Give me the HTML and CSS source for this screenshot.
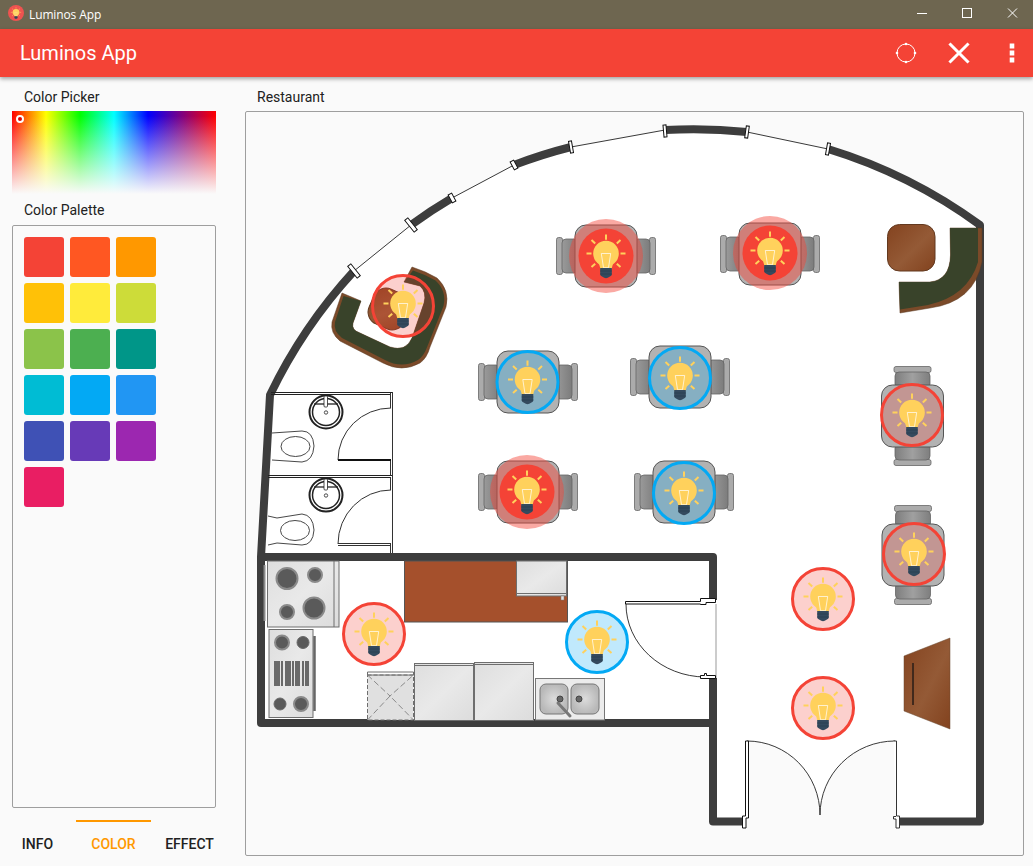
FILE: index.html
```html
<!DOCTYPE html>
<html lang="en">
<head>
<meta charset="utf-8">
<title>Luminos App</title>
<link rel="stylesheet" href="styles.css">
</head>
<body>
<div class="app">
  <header class="titlebar">
    <svg class="logo" viewBox="-30 -30 60 60"><circle class="logo-disc" r="30"/><use href="#bulb"/></svg>
    <span class="titlebar-text">Luminos App</span>
    <div class="win-controls">
      <svg class="win-icon" viewBox="0 0 45 29"><path class="win-stroke" d="M19 13.500H29"/></svg>
      <svg class="win-icon" viewBox="0 0 45 29"><rect class="win-stroke" x="19.500" y="8.500" width="9" height="9"/></svg>
      <svg class="win-icon" viewBox="0 0 45 29"><path class="win-stroke" d="M20 8.500L29 17.500M29 8.500L20 17.500"/></svg>
    </div>
  </header>
  <nav class="appbar">
    <span class="appbar-title">Luminos App</span>
    <div class="appbar-actions">
      <svg class="action" viewBox="0 0 24 24"><circle class="ring-line" cx="12" cy="12" r="9"/><circle class="dot" cx="12" cy="3" r="1.300"/><circle class="dot" cx="12" cy="21" r="1.300"/><circle class="dot" cx="3" cy="12" r="1.300"/><circle class="dot" cx="21" cy="12" r="1.300"/></svg>
      <svg class="action" viewBox="0 0 24 24"><path class="x-line" d="M3.500 3.500L20.500 20.500M20.500 3.500L3.500 20.500"/></svg>
      <svg class="action" viewBox="0 0 24 24"><path class="dot" d="M9.700 2.500h4.600v5H9.700zM9.700 9.500h4.600v5H9.700zM9.700 16.500h4.600v5H9.700z"/></svg>
    </div>
  </nav>
  <main class="main">
    <aside class="sidebar">
      <div class="label label-top">Color Picker</div>
      <div class="picker"><span class="picker-handle"></span></div>
      <div class="label label-mid">Color Palette</div>
      <div class="palette">
        <span class="swatch c1"></span><span class="swatch c2"></span><span class="swatch c3"></span>
        <span class="swatch c4"></span><span class="swatch c5"></span><span class="swatch c6"></span>
        <span class="swatch c7"></span><span class="swatch c8"></span><span class="swatch c9"></span>
        <span class="swatch c10"></span><span class="swatch c11"></span><span class="swatch c12"></span>
        <span class="swatch c13"></span><span class="swatch c14"></span><span class="swatch c15"></span>
        <span class="swatch c16"></span>
      </div>
      <div class="tabs">
        <div class="tab">INFO</div>
        <div class="tab tab-active">COLOR</div>
        <div class="tab">EFFECT</div>
      </div>
    </aside>
    <section class="content">
      <div class="label label-top">Restaurant</div>
      <div class="plan-frame">
<svg class="plan" viewBox="246 112 777 743" preserveAspectRatio="xMinYMin meet">
  <defs>
    <linearGradient id="wood" x1="0" y1="0" x2="1" y2="1"><stop offset="0" stop-color="#84431f"/><stop offset=".55" stop-color="#945a36"/><stop offset="1" stop-color="#82421e"/></linearGradient>
    <linearGradient id="steel" x1="0" y1="0" x2="1" y2="1"><stop offset="0" stop-color="#dedede"/><stop offset=".5" stop-color="#e9e9e9"/><stop offset="1" stop-color="#dcdcdc"/></linearGradient>
    <linearGradient id="seatH" x1="0" y1="0" x2="1" y2="0"><stop offset="0" stop-color="#9a9a9a"/><stop offset="1" stop-color="#7c7c7c"/></linearGradient>
    <linearGradient id="seatV" x1="0" y1="0" x2="1" y2="0"><stop offset="0" stop-color="#7e7e7e"/><stop offset=".5" stop-color="#a0a0a0"/><stop offset="1" stop-color="#7e7e7e"/></linearGradient>
    <radialGradient id="basin"><stop offset="0" stop-color="#dcdcdc"/><stop offset="1" stop-color="#b8b8b8"/></radialGradient>

    <g id="bulb">
      <g class="rays">
        <path d="M0-21.500V-16.300M-19.500-2.500H-14.500M19.500-2.500H14.500M-14.500-16L-10.800-12.500M14.500-16L10.800-12.500M-14.500 11L-10.800 7.700M14.500 11L10.800 7.700"/>
      </g>
      <circle class="globe" cy="-2.500" r="12.800"/>
      <path class="globe" d="M-7.500 6L-5.500 13H5.500L7.500 6Z"/>
      <path class="filament" d="M-4.700-2.500H4.700L2.500 11.700H-2.500Z"/>
      <path class="bulb-base" d="M-5.800 12H5.800V18.500Q5.800 20 3.500 20.800Q0 23.500-3.500 20.800Q-5.800 20-5.800 18.500Z"/>
      <path class="bulb-stripe" d="M-5.800 15H5.800M-5.800 18H5.800"/>
    </g>

    <g id="chairH">
      <rect class="chair-back" x="-49.500" y="-18.500" width="6" height="37" rx="2"/>
      <rect class="chair-seat" x="-44" y="-17" width="16" height="34" rx="4"/>
      <rect class="chair-back" x="43.500" y="-18.500" width="6" height="37" rx="2"/>
      <rect class="chair-seat" x="28" y="-17" width="16" height="34" rx="4"/>
      <rect class="table" x="-31" y="-31" width="62" height="62" rx="11"/>
    </g>
    <g id="chairV">
      <rect class="chair-back" x="-18.500" y="-49.500" width="37" height="6" rx="2"/>
      <rect class="chair-seat-v" x="-17.500" y="-44" width="35" height="16" rx="4"/>
      <rect class="chair-back" x="-18.500" y="43.500" width="37" height="6" rx="2"/>
      <rect class="chair-seat-v" x="-17.500" y="28" width="35" height="16" rx="4"/>
      <rect class="table" x="-31" y="-31" width="62" height="62" rx="11"/>
    </g>

    <g id="sink">
      <circle class="sink-outer" r="16.500"/>
      <circle class="sink-inner" r="13.500"/>
      <path class="sink-bar" d="M-12-8H12"/>
      <rect class="sink-tap" x="-2" y="-16" width="3.500" height="11" rx="1"/>
      <circle class="sink-drain" cy="0.500" r="1.700"/>
    </g>
    <g id="lightRed">
      <circle class="ring ring-red" r="30.500"/>
      <use href="#bulb"/>
    </g>
    <g id="lightBlue">
      <circle class="ring ring-blue" r="30.500"/>
      <use href="#bulb"/>
    </g>
    <g id="lightGlow">
      <circle class="halo" r="37"/>
      <circle class="halo-core" r="27.500"/>
      <use href="#bulb"/>
    </g>
  </defs>

  <!-- floor -->
  <path class="floor" d="M270 395A510 510 0 0 1 354 271L411 225A510 510 0 0 1 452 198L514 165A510 510 0 0 1 571 147L665 130A510 510 0 0 1 747 132L828 149A510 510 0 0 1 980 225V821.500H897L895 741A75 74 0 0 0 820 815A73 74 0 0 0 747 741L745 821.500H713V723H261V557Z"/>

  <!-- walls -->
  <path class="wall" d="M354 271A510 510 0 0 0 270 395L261 557V723H713M713 600V557H261M713 678V821.500H745M897 821.500H980V225A510 510 0 0 0 828 149M411 225A510 510 0 0 1 452 198M514 165A510 510 0 0 1 571 147M665 130A510 510 0 0 1 747 132"/>

  <!-- windows -->
  <path class="win-line" d="M354 271L411 225M452 198L514 165M571 147L665 130M747 132L828 149"/>
  <rect class="cap" x="-2" y="-7.500" width="4" height="15" transform="translate(354 271) rotate(-39)"/>
  <rect class="cap" x="-2" y="-7.500" width="4" height="15" transform="translate(411 225) rotate(-39)"/>
  <rect class="cap" x="-2" y="-4.500" width="4" height="9" transform="translate(452 198) rotate(-28)"/>
  <rect class="cap" x="-2" y="-4.500" width="4" height="9" transform="translate(514 165) rotate(-28)"/>
  <rect class="cap" x="-1.500" y="-6" width="3" height="12" transform="translate(571 147) rotate(-10)"/>
  <rect class="cap" x="-1.500" y="-6" width="3" height="12" transform="translate(665 131) rotate(-5)"/>
  <rect class="cap" x="-1.500" y="-6" width="3" height="12" transform="translate(747 132) rotate(8)"/>
  <rect class="cap" x="-1.500" y="-6" width="3" height="12" transform="translate(828 149) rotate(10)"/>

  <!-- restrooms -->
  <path class="line-double" d="M271 392.500H392.500M271 394.500H390.500M268 475.500H392.500M268 477.500H390.500"/>
  <path class="line-thin" d="M392.500 392V553M390.500 393V408M390.500 460V475M390.500 477V490M390.500 544V553"/>
  <path class="line-thin" d="M391 408A53 52 0 0 0 338 460M391 490A53 54 0 0 0 338 544"/>
  <path class="line-thick" d="M338 460H391"/>
  <path class="line-thin" d="M338 545.500H391M338 543.500H391"/>
  <use href="#sink" transform="translate(326 412)"/>
  <use href="#sink" transform="translate(326 495)"/>
  <path class="toilet" d="M272 433L302 431Q313 431 314 446Q313 461 302 462L272 460"/>
  <ellipse class="toilet" cx="295.500" cy="446.500" rx="14.500" ry="10"/>
  <path class="toilet" d="M268 516L277 518L302 514Q313 515 314 530Q313 545 302 545L277 543L268 545"/>
  <ellipse class="toilet" cx="295" cy="530.500" rx="14.500" ry="10"/>

  <!-- kitchen -->
  <rect class="steel" x="267.500" y="561" width="71.500" height="66"/>
  <path class="steel-line" d="M334 561V627"/>
  <path class="handle" d="M264.500 565V621"/>
  <circle class="burner" cx="287" cy="578.500" r="10.500"/>
  <circle class="burner" cx="315" cy="575" r="7"/>
  <circle class="burner" cx="287" cy="612" r="7"/>
  <circle class="burner" cx="314" cy="608" r="10.500"/>
  <rect class="steel" x="269" y="629.500" width="44" height="88"/>
  <path class="handle handle-dark" d="M314.500 636V711"/>
  <circle class="burner" cx="282" cy="642.500" r="7"/>
  <circle class="burner burner-flat" cx="303" cy="642.500" r="6"/>
  <circle class="burner burner-flat" cx="280" cy="704" r="6"/>
  <circle class="burner" cx="301" cy="704" r="7"/>
  <path class="grill" d="M274 661h6v25h-6zM281 661h2v25h-2zM285 661h6v25h-6zM292 661h2v25h-2zM295 661h5v25h-5zM302 661h2v25h-2zM305 661h4v25h-4z"/>

  <rect class="counter" x="404.500" y="561" width="163" height="61"/>
  <rect class="steel" x="516.500" y="561" width="50" height="35"/>
  <path class="steel-line" d="M516.500 593.500H566.500"/>
  <rect class="steel-peg" x="561" y="596" width="3" height="4"/>

  <rect class="steel-dash" x="367.500" y="675" width="46" height="45"/>
  <path class="dash" d="M367.500 675L390 696L413.500 675M367.500 720L390 696L413.500 720"/>
  <path class="steel-line" d="M367.500 672V675H413.500V672H367.500"/>
  <rect class="steel" x="414.500" y="663.500" width="59" height="57"/>
  <path class="steel-line" d="M414.500 665.500H473.500"/>
  <rect class="steel" x="474.500" y="662.500" width="59" height="58"/>
  <path class="steel-line" d="M474.500 664.500H533.500"/>
  <rect class="wash" x="535.500" y="678.500" width="69" height="41.500"/>
  <rect class="basin" x="540" y="684" width="28" height="30" rx="6"/>
  <rect class="basin" x="571" y="684" width="28" height="30" rx="6"/>
  <circle class="drain" cx="560" cy="699" r="3"/>
  <circle class="drain" cx="579" cy="699" r="3"/>
  <path class="faucet" d="M558 703L570 716"/>

  <!-- kitchen door -->
  <path class="thin-wall" d="M716 604V678"/>
  <path class="door-arc" d="M626 604A80 73 0 0 0 705 677"/>
  <path class="door-part" d="M625.500 601.500H700.500V598.500H715.500V602.500H706V604.500H700.500V604H625.500Z"/>
  <path class="door-part" d="M700.500 675.500H704.500V673.500H706.500V675.500H715.500V678.500H700.500Z"/>

  <!-- entrance doors -->
  <path class="door-arc" d="M747 741A73 74 0 0 1 820 815M895 741A75 74 0 0 0 820 815"/>
  <path class="door-part" d="M745.500 741H748.500V816H748.500V818H746V828H742.500V816H745.500Z"/>
  <path class="door-part door-grey" d="M893.500 741H896.500V816H899.500V828H896V819H893.500V816.500H896"/>

  <!-- bars -->
  <path class="bar-edge" d="M342 293L332 322Q330 333 340 341L383 363Q402 373 420 363Q427 358 430 347L446 307Q450 290 437 278Q425 271 412 267L404 282L420 286Q427 292 424 303L412 338Q406 352 390 347L360 333Q351 330 353 323L361 301Z"/>
  <path class="bar-top" d="M343.500 296L335 322Q333 331 342 338L385 360Q402 369 418 360Q424 356 427.500 346L443.500 306Q447 291 435.500 280.500Q424 274 413 270.500L404 282L420 286Q427 292 424 303L412 338Q406 352 390 347L360 333Q351 330 353 323L361 301Z"/>
  <rect class="wood" x="370" y="290" width="38" height="38" rx="13" transform="rotate(24 389 309)"/>

  <rect class="wood" x="887.500" y="224.500" width="47.500" height="46.500" rx="12"/>
  <path class="bar-edge" d="M950 228H982V262Q974 302 930 308L900 313L899 282H930Q950 280 950.500 255Z"/>
  <path class="bar-top" d="M950 228H978V262Q968 296 928 305L900 309.500L899 282H930Q950 280 950.500 255Z"/>

  <!-- cabinet -->
  <path class="cabinet" d="M904 656L950 638V729L904 711Z"/>
  <path class="cabinet-slot" d="M913 663V705"/>

  <!-- tables -->
  <use href="#chairH" transform="translate(606 256)"/>
  <use href="#chairH" transform="translate(770 254)"/>
  <use href="#chairH" transform="translate(528 382)"/>
  <use href="#chairH" transform="translate(680 377)"/>
  <use href="#chairH" transform="translate(528 492)"/>
  <use href="#chairH" transform="translate(684 492)"/>
  <use href="#chairV" transform="translate(912.500 416)"/>
  <use href="#chairV" transform="translate(913 555)"/>

  <!-- lights -->
  <use href="#lightRed" transform="translate(403 306)"/>
  <use href="#lightGlow" transform="translate(606 256)"/>
  <use href="#lightGlow" transform="translate(770 253)"/>
  <use href="#lightBlue" transform="translate(527.500 382)"/>
  <use href="#lightBlue" transform="translate(680 378)"/>
  <use href="#lightGlow" transform="translate(527 492)"/>
  <use href="#lightBlue" transform="translate(684 493)"/>
  <use href="#lightRed" transform="translate(912 415)"/>
  <use href="#lightRed" transform="translate(914 554)"/>
  <use href="#lightRed" transform="translate(374 634)"/>
  <use href="#lightBlue" transform="translate(597 642)"/>
  <use href="#lightRed" transform="translate(823 599)"/>
  <use href="#lightRed" transform="translate(823 708)"/>
</svg>
      </div>
    </section>
  </main>
</div>
</body>
</html>
```
FILE: styles.css
```css
* { box-sizing: border-box; }
html, body { margin: 0; padding: 0; }
body { background: #fafafa; font-family: Roboto, "Liberation Sans", sans-serif; color: #212121; overflow: hidden; }
.app { width: 1033px; height: 866px; display: flex; flex-direction: column; }

.titlebar { height: 29px; flex: none; background: #6e6650; color: #fff; display: flex; align-items: center; padding-left: 8px; }
.logo { width: 16px; height: 16px; margin-top: -3px; }
.logo-disc { fill: #ef5350; }
.titlebar-text { margin-left: 5px; margin-top: -1px; font: 12px "Open Sans", "Noto Sans", sans-serif; letter-spacing: -.12px; }
.win-controls { margin-left: auto; display: flex; }
.win-icon { width: 45px; height: 29px; display: block; }
.win-stroke { fill: none; stroke: #fff; stroke-width: 1; }

.appbar { height: 48px; flex: none; background: #f44336; color: #fff; display: flex; align-items: center; padding-left: 20px; box-shadow: 0 2px 4px rgba(0, 0, 0, .35); position: relative; z-index: 1; }
.appbar-title { font-size: 20px; }
.appbar-actions { margin-left: auto; display: flex; gap: 29px; padding-right: 9px; }
.action { width: 24px; height: 24px; display: block; }
.ring-line { fill: none; stroke: #fff; stroke-width: 1; }
.dot { fill: #fff; }
.x-line { fill: none; stroke: #fff; stroke-width: 3; stroke-linecap: square; }

.main { flex: 1; display: flex; min-height: 0; }
.sidebar { width: 245px; flex: none; display: flex; flex-direction: column; padding-left: 12px; padding-right: 29px; }
.label { font-size: 14px; padding-left: 12px; line-height: 20px; }
.label-top { height: 34px; padding-top: 10px; flex: none; }
.label-mid { height: 31px; padding-top: 6px; flex: none; }

.picker { height: 83px; flex: none; position: relative;
  background:
    linear-gradient(to bottom, rgba(250,250,250,0) 6%, rgba(250,250,250,1) 100%),
    linear-gradient(to right, #f00 0%, #ff0 16.67%, #0f0 33.33%, #0ff 50%, #00f 66.67%, #f00 100%); }
.picker-handle { position: absolute; left: 4px; top: 4px; width: 8px; height: 8px; border: 2px solid #fff; border-radius: 50%; background: #e00000; }

.palette { flex: 1; min-height: 0; border: 1px solid #9e9e9e; border-radius: 2px; padding: 11px; display: grid; grid-template-columns: repeat(3, 40px); grid-auto-rows: 40px; gap: 6px; align-content: start; }
.swatch { border-radius: 3px; display: block; }
.c1 { background: #f44336; } .c2 { background: #ff5722; } .c3 { background: #ff9800; }
.c4 { background: #ffc107; } .c5 { background: #ffeb3b; } .c6 { background: #cddc39; }
.c7 { background: #8bc34a; } .c8 { background: #4caf50; } .c9 { background: #009688; }
.c10 { background: #00bcd4; } .c11 { background: #03a9f4; } .c12 { background: #2196f3; }
.c13 { background: #3f51b5; } .c14 { background: #673ab7; } .c15 { background: #9c27b0; }
.c16 { background: #e91e63; }

.tabs { height: 58px; flex: none; display: flex; gap: 1px; margin-left: -12px; margin-right: -13px; padding-top: 12px; }
.tab { width: 75px; font-size: 14px; font-weight: 500; text-align: center; padding-top: 13px; line-height: 18px; border-top: 2px solid transparent; }
.tab-active { color: #ff9800; border-top-color: #ff9800; }

.content { flex: 1; min-width: 0; display: flex; flex-direction: column; padding-right: 9px; padding-bottom: 10px; }
.plan-frame { flex: 1; min-height: 0; border: 1px solid #9e9e9e; border-radius: 2px; background: #fafafa; overflow: hidden; }
.plan { display: block; width: 777px; height: 743px; }

.floor { fill: #fff; }
.wall { fill: none; stroke: #3d3d3d; stroke-width: 8; stroke-linejoin: round; }
.win-line { fill: none; stroke: #222; stroke-width: .9; }
.cap { fill: #fff; stroke: #111; stroke-width: 1; }
.line-double { fill: none; stroke: #222; stroke-width: 1; }
.line-thin { fill: none; stroke: #333; stroke-width: 1; }
.line-thick { fill: none; stroke: #111; stroke-width: 1.800; }
.toilet { fill: #fff; stroke: #333; stroke-width: .9; }
.sink-outer { fill: #fff; stroke: #222; stroke-width: 2; }
.sink-inner { fill: #fff; stroke: #222; stroke-width: 1.500; }
.sink-bar { stroke: #222; stroke-width: 1.300; fill: none; }
.sink-tap { fill: #fff; stroke: #222; stroke-width: .8; }
.sink-drain { fill: #fff; stroke: #222; stroke-width: .8; }

.steel { fill: url(#steel); stroke: #6e6e6e; stroke-width: 1; }
.steel-line { fill: none; stroke: #6e6e6e; stroke-width: 1; }
.steel-peg { fill: #e4e4e4; stroke: #777; stroke-width: .5; }
.steel-dash { fill: #e0e0e0; stroke: #6e6e6e; stroke-width: 1; stroke-dasharray: 4 2; }
.dash { fill: none; stroke: #8a8a8a; stroke-width: 1; stroke-dasharray: 6 3; }
.handle { fill: none; stroke: #8a8a8a; stroke-width: 2; }
.handle-dark { stroke: #666; stroke-width: 2.500; }
.burner { fill: #5a5a5a; stroke: #8a8a8a; stroke-width: 2; }
.burner-flat { stroke-width: 1; stroke: #6a6a6a; }
.grill { fill: #6a6a6a; }
.counter { fill: #a5502c; stroke: #555; stroke-width: 1; }
.wash { fill: #ececec; stroke: #777; stroke-width: 1; }
.basin { fill: url(#basin); stroke: #777; stroke-width: 1; }
.drain { fill: #666; stroke: #444; stroke-width: 1; }
.faucet { fill: none; stroke: #777; stroke-width: 3; stroke-linecap: round; }

.thin-wall { fill: none; stroke: #999; stroke-width: 1; }
.door-arc { fill: none; stroke: #222; stroke-width: .9; }
.door-part { fill: #fff; stroke: #111; stroke-width: 1; }
.door-grey { stroke: #333; }

.bar-edge { fill: #7b4a29; stroke: #5a3a22; stroke-width: .5; }
.bar-top { fill: #39432a; }
.wood { fill: url(#wood); stroke: #63391f; stroke-width: 1; }
.cabinet { fill: url(#wood); stroke: #6b4a32; stroke-width: .5; }
.cabinet-slot { fill: none; stroke: #41291c; stroke-width: 2; }

.chair-back { fill: #ababab; stroke: #666; stroke-width: .8; }
.chair-seat { fill: url(#seatH); stroke: #666; stroke-width: .8; }
.chair-seat-v { fill: url(#seatV); stroke: #666; stroke-width: .8; }
.table { fill: #b2b2b2; stroke: #555; stroke-width: 1; }

.ring { stroke-width: 3; }
.ring-red { fill: rgba(244, 67, 54, .25); stroke: #f44336; }
.ring-blue { fill: rgba(3, 169, 244, .25); stroke: #03a9f4; }
.halo { fill: rgba(244, 67, 54, .46); }
.halo-core { fill: #f44336; }
.rays path { fill: none; stroke: #ffd15c; stroke-width: 2; }
.globe { fill: #ffd15c; }
.filament { fill: none; stroke: #fff; stroke-width: .7; }
.bulb-base { fill: #344a5e; }
.bulb-stripe { fill: none; stroke: #2a3d4e; stroke-width: .7; }
```
